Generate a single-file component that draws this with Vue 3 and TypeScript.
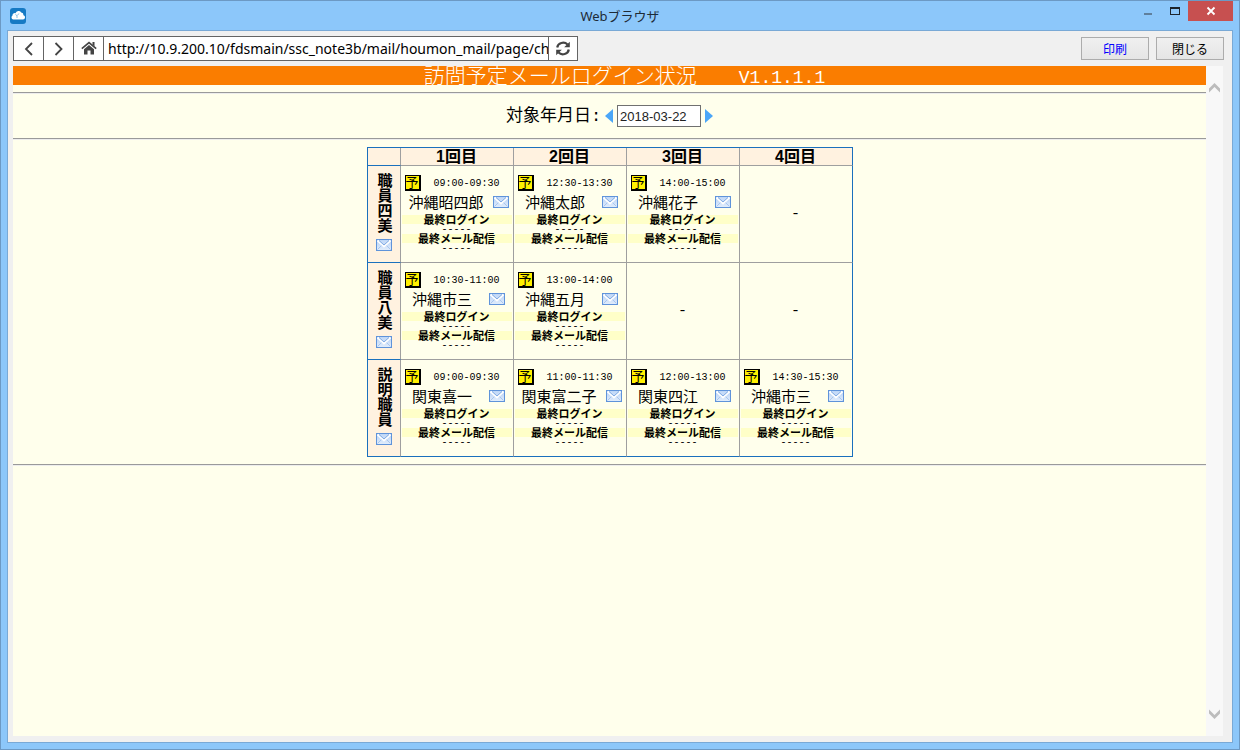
<script setup lang="ts">
import { ref } from 'vue'

interface Visit {
  time: string
  name: string
}

interface StaffRow {
  staff: string
  visits: (Visit | null)[]
}

const address = ref('http://10.9.200.10/fdsmain/ssc_note3b/mail/houmon_mail/page/ch')
const targetDate = ref('2018-03-22')

const rounds: string[] = ['1回目', '2回目', '3回目', '4回目']

const rows: StaffRow[] = [
  {
    staff: '職員四美',
    visits: [
      { time: '09:00-09:30', name: '沖縄昭四郎' },
      { time: '12:30-13:30', name: '沖縄太郎' },
      { time: '14:00-15:00', name: '沖縄花子' },
      null,
    ],
  },
  {
    staff: '職員八美',
    visits: [
      { time: '10:30-11:00', name: '沖縄市三' },
      { time: '13:00-14:00', name: '沖縄五月' },
      null,
      null,
    ],
  },
  {
    staff: '説明職員',
    visits: [
      { time: '09:00-09:30', name: '関東喜一' },
      { time: '11:00-11:30', name: '関東富二子' },
      { time: '12:00-13:00', name: '関東四江' },
      { time: '14:30-15:30', name: '沖縄市三' },
    ],
  },
]

function shiftDate(days: number): void {
  const d = new Date(targetDate.value + 'T00:00:00Z')
  if (Number.isNaN(d.getTime())) return
  d.setUTCDate(d.getUTCDate() + days)
  targetDate.value = d.toISOString().slice(0, 10)
}
</script>

<template>
  <div class="window">
    <svg class="defs" aria-hidden="true">
      <defs>
        <linearGradient id="mail-fill" x1="0" y1="0" x2="0" y2="1">
          <stop offset="0" stop-color="#b4cff5" />
          <stop offset="1" stop-color="#e3eefc" />
        </linearGradient>
        <symbol id="mail" viewBox="0 0 16 12">
          <rect x="0.5" y="0.5" width="15" height="11" fill="url(#mail-fill)" stroke="#5f93da" />
          <path d="M1.5 10.5 6 6M14.5 10.5 10 6" stroke="#a9c6ee" fill="none" />
          <path d="M1.5 1.5 8 7.5l6.5-6" stroke="#fff" stroke-width="2" fill="none" />
          <path d="M3 1.5 8 6l5-4.500" stroke="#7fa9e2" fill="#c6dbf8" />
        </symbol>
      </defs>
    </svg>

    <header class="titlebar">
      <svg class="app-icon" viewBox="0 0 16 16" aria-hidden="true">
        <rect width="16" height="16" rx="3" fill="#167ac4" />
        <path
          d="M3.200 11.500a2.200 2.200 0 0 1-.7-4 2.300 2.300 0 0 1 3-2.300 3.200 3.200 0 0 1 5.700-.7 2.600 2.600 0 0 1 2.300 2.700 2.200 2.200 0 0 1-.5 4.300z"
          fill="#fff"
        />
        <path d="M5.500 6.200 7 8v2M8.800 5.500 7.500 7.500" stroke="#8cc0e6" fill="none" />
      </svg>
      <h1 class="window-title">Webブラウザ</h1>
      <div class="controls">
        <button type="button" class="ctl min" aria-label="最小化">
          <svg viewBox="0 0 10 10"><rect x="1" y="7" width="8" height="2" fill="#5f7f9c" /></svg>
        </button>
        <button type="button" class="ctl max" aria-label="最大化">
          <svg viewBox="0 0 10 10">
            <path d="M0 1h10v8H0zM1 3v5h8V3z" fill="#1c242c" fill-rule="evenodd" />
          </svg>
        </button>
        <button type="button" class="ctl close" aria-label="ウィンドウを閉じる">
          <svg viewBox="0 0 10 10"><path d="M1.500 1.500l7 7M8.500 1.500l-7 7" stroke="#fff" stroke-width="1.800" /></svg>
        </button>
      </div>
    </header>

    <div class="client">
      <div class="toolbar">
        <div class="nav">
          <button type="button" class="nav-btn" aria-label="戻る">
            <svg viewBox="0 0 16 16"><path d="M11 2 5 8l6 6" fill="none" stroke="#444" stroke-width="1.800" /></svg>
          </button>
          <button type="button" class="nav-btn" aria-label="進む">
            <svg viewBox="0 0 16 16"><path d="M4.500 2l6 6-6 6" fill="none" stroke="#444" stroke-width="1.800" /></svg>
          </button>
          <button type="button" class="nav-btn" aria-label="ホーム">
            <svg viewBox="0 0 16 16">
              <path d="M.8 7.700 8 1.700l7.200 6" fill="none" stroke="#444" stroke-width="1.700" />
              <path d="M11.500 1h2v4.500l-2-1.700z" fill="#444" />
              <path d="M3 8.200 8 4l5 4.200V13.500H9.500v-4h-3v4H3z" fill="#444" />
            </svg>
          </button>
          <input v-model="address" class="address" type="text" aria-label="アドレス" />
          <button type="button" class="nav-btn reload" aria-label="再読み込み">
            <svg viewBox="0 0 16 16">
              <path d="M2.200 6.500a6 5.500 0 0 1 10.300-3" fill="none" stroke="#444" stroke-width="2.200" />
              <path d="M14.800.7v5.600H9.200z" fill="#444" />
              <path d="M13.800 8.500a6 5.500 0 0 1-10.300 3" fill="none" stroke="#444" stroke-width="2.200" />
              <path d="M1.200 14.300V8.700h5.600z" fill="#444" />
            </svg>
          </button>
        </div>
        <div class="actions">
          <button type="button" class="action print">印刷</button>
          <button type="button" class="action">閉じる</button>
        </div>
      </div>

      <div class="viewport">
        <main class="page">
          <h2 class="banner">訪問予定メールログイン状況　　<span class="version">V1.1.1.1</span></h2>
          <hr />
          <form class="date-row" @submit.prevent>
            <label for="target-date">対象年月日<span class="colon">:</span></label>
            <button type="button" class="step" aria-label="前の日" @click="shiftDate(-1)">
              <svg viewBox="0 0 8 14"><path d="M8 0v14L0 7z" fill="#4ba6f8" /></svg>
            </button>
            <input id="target-date" v-model="targetDate" class="date" type="text" />
            <button type="button" class="step" aria-label="次の日" @click="shiftDate(1)">
              <svg viewBox="0 0 8 14"><path d="M0 0v14l8-7z" fill="#4ba6f8" /></svg>
            </button>
          </form>
          <hr />
          <table class="schedule">
            <thead>
              <tr>
                <th class="corner"></th>
                <th v-for="r in rounds" :key="r" scope="col">{{ r }}</th>
              </tr>
            </thead>
            <tbody>
              <tr v-for="row in rows" :key="row.staff">
                <th class="staff" scope="row">
                  <div class="staff-box">
                    <span class="staff-name">{{ row.staff }}</span>
                    <svg class="mail" role="img" aria-label="メール"><use href="#mail" /></svg>
                  </div>
                </th>
                <td v-for="(v, i) in row.visits" :key="i" :class="{ empty: !v }">
                  <template v-if="v">
                    <div class="slot">
                      <span class="badge">予</span>
                      <span class="time">{{ v.time }}</span>
                    </div>
                    <div class="person">
                      <span class="name">{{ v.name }}</span>
                      <svg class="mail" role="img" aria-label="メール"><use href="#mail" /></svg>
                    </div>
                    <div class="band">最終ログイン</div>
                    <div class="dashes">-----</div>
                    <div class="band">最終メール配信</div>
                    <div class="dashes">-----</div>
                  </template>
                  <template v-else>-</template>
                </td>
              </tr>
            </tbody>
          </table>
          <hr />
        </main>
        <div class="scrollbar" aria-hidden="true">
          <svg viewBox="0 0 11 10"><path d="M0 9.500V5.500L5.500 0 11 5.500v4L5.500 4z" fill="#bcbcbc" /></svg>
          <svg viewBox="0 0 11 10"><path d="M0 .5v4L5.500 10 11 4.500v-4L5.500 6z" fill="#bcbcbc" /></svg>
        </div>
      </div>
    </div>
  </div>
</template>

<style>
html,
body {
  margin: 0;
  background: #8cc7fa;
}
</style>

<style scoped>
* {
  box-sizing: border-box;
}

button,
input {
  margin: 0;
  padding: 0;
  border-radius: 0;
  font-family: inherit;
}

svg {
  display: block;
}

.window {
  display: flex;
  flex-direction: column;
  min-height: 100vh;
  padding: 0 6px 6px;
  border: 1px solid #6c99c4;
  background: #8cc7fa;
  color: #000;
  font-family: "Liberation Sans", "Noto Sans CJK JP", sans-serif;
}

.defs {
  position: absolute;
  width: 0;
  height: 0;
}

.titlebar {
  display: grid;
  grid-template-columns: 1fr auto 1fr;
  align-items: center;
  height: 29px;
}

.app-icon {
  width: 16px;
  height: 16px;
  margin-left: 3px;
}

.window-title {
  margin: 0;
  color: #1e2a36;
  font: 400 13px/28px "Noto Sans", "Noto Sans CJK JP", sans-serif;
}

.controls {
  display: flex;
  justify-content: flex-end;
  align-self: start;
}

.ctl {
  display: flex;
  align-items: center;
  justify-content: center;
  width: 27px;
  height: 20px;
  border: 0;
  background: transparent;
}

.ctl svg {
  width: 10px;
  height: 10px;
}

.close {
  width: 45px;
  background: #c75050;
}

.client {
  display: flex;
  flex: 1;
  flex-direction: column;
  gap: 5px;
  padding: 5px 8px 6px 5px;
  border: 1px solid #79a9d6;
  background: #f0f0f0;
}

.toolbar {
  display: flex;
  align-items: center;
  justify-content: space-between;
}

.nav {
  display: flex;
  width: 565px;
  height: 25px;
  border: 1px solid #646464;
  background: #fff;
}

.nav-btn {
  display: flex;
  flex: none;
  align-items: center;
  justify-content: center;
  width: 30px;
  border: 0;
  border-right: 1px solid #646464;
  background: #fff;
}

.nav-btn svg {
  width: 16px;
  height: 16px;
}

.reload {
  width: 29px;
  border-right: 0;
  border-left: 1px solid #646464;
}

.address {
  flex: 1;
  min-width: 0;
  padding-left: 4px;
  border: 0;
  background: #fff;
  color: #000;
  font: 400 14px "Noto Sans", sans-serif;
}

.actions {
  display: flex;
  gap: 7px;
}

.action {
  width: 68px;
  height: 23px;
  border: 1px solid #acacac;
  background: linear-gradient(#f0f0f0, #e5e5e5);
  color: #000;
  font: 400 12px/20px "Noto Sans CJK JP", sans-serif;
}

.print {
  color: #00f;
}

.viewport {
  display: flex;
  flex: 1;
  margin-right: 1px;
}

.page {
  flex: 1;
  background: #ffffec;
}

.scrollbar {
  display: flex;
  flex: none;
  flex-direction: column;
  align-items: center;
  justify-content: space-between;
  width: 17px;
  padding: 17px 0;
  background: #f8f8f8;
}

.scrollbar svg {
  width: 11px;
  height: 10px;
}

.banner {
  height: 19px;
  margin: 0;
  padding-left: 30px;
  background: #fa7d00;
  color: #fff;
  font-size: 21px;
  font-weight: 300;
  line-height: 19px;
  text-align: center;
  white-space: nowrap;
}

.version {
  font-family: "Liberation Mono", monospace;
  font-size: 18px;
}

hr {
  height: 2px;
  margin: 7px 0;
  border: 0;
  border-top: 1px solid #9a9a9a;
  border-bottom: 1px solid #ededed;
}

.date-row {
  display: flex;
  align-items: center;
  justify-content: center;
  gap: 4px;
  height: 44px;
  margin: -7px 0;
}

.date-row label {
  font-size: 17px;
  line-height: 24px;
}

.colon {
  font-family: "Liberation Mono", monospace;
}

.step {
  width: 8px;
  height: 14px;
  border: 0;
  background: transparent;
}

.step svg {
  width: 8px;
  height: 14px;
}

.date {
  width: 84px;
  height: 22px;
  padding: 0 2px;
  border: 1px solid #707070;
  background: #fff;
  color: #222;
  font: 400 13px "Liberation Sans", sans-serif;
}

.schedule {
  margin: 0 auto;
  border-top: 1px solid #1a70bd;
  border-left: 1px solid #1a70bd;
  border-spacing: 0;
  table-layout: fixed;
  width: 486px;
}

th,
td {
  height: 97px;
  padding: 0;
  border-right: 1px solid #9f9f9f;
  border-bottom: 1px solid #9f9f9f;
}

th {
  background: #fff2e0;
}

thead th {
  height: 18px;
  font-size: 16px;
  font-weight: 700;
  line-height: 17px;
}

.corner {
  width: 33px;
}

.corner,
.staff,
tbody tr:last-child td {
  border-bottom-color: #1a70bd;
}

tr > :last-child {
  border-right-color: #1a70bd;
}

.staff-box {
  display: flex;
  flex-direction: column;
  align-items: center;
  gap: 6px;
  padding-bottom: 5px;
}

.staff-name {
  font-size: 15px;
  font-weight: 700;
  line-height: 16px;
  writing-mode: vertical-rl;
}

.mail {
  flex: none;
  width: 16px;
  height: 12px;
}

td {
  padding: 8px 1px 0;
  vertical-align: top;
}

td.empty {
  padding: 0;
  text-align: center;
  vertical-align: middle;
  font: 400 15px "Liberation Mono", monospace;
}

.slot {
  display: flex;
  align-items: center;
  gap: 13px;
  height: 18px;
  padding-left: 3px;
}

.badge {
  width: 16px;
  height: 16px;
  border: 1px solid #000;
  border-width: 1px 2px 2px 1px;
  background: #fff000;
  font-size: 13px;
  line-height: 13px;
  text-align: center;
}

.time {
  padding-top: 2px;
  font: 400 10px/16px "Liberation Mono", monospace;
}

.person {
  display: flex;
  align-items: center;
  justify-content: center;
  gap: 9px;
  height: 20px;
  margin-bottom: 3px;
  padding-left: 4px;
}

.name {
  min-width: 68px;
  padding-top: 2px;
  font-size: 15px;
  line-height: 20px;
}

.band {
  height: 9px;
  background: #ffffc8;
  font-size: 11px;
  font-weight: 700;
  line-height: 11px;
  text-align: center;
}

.dashes {
  height: 10px;
  font: 400 10px/12px "Liberation Mono", monospace;
  text-align: center;
}
</style>
